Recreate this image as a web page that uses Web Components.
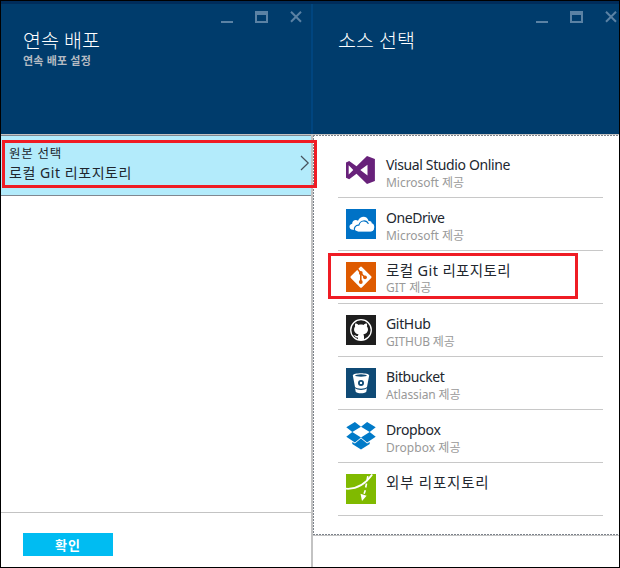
<!DOCTYPE html>
<html lang="ko">
<head>
<meta charset="utf-8">
<title>연속 배포</title>
<style>
html,body{margin:0;padding:0}
body{width:620px;height:568px;overflow:hidden;font-family:"Noto Sans","Noto Sans CJK KR",sans-serif;background:#fff}
</style>
</head>
<body>
<portal-window></portal-window>
<script>
const define=(name,html,setup)=>customElements.define(name,class extends HTMLElement{
  connectedCallback(){
    if(this.shadowRoot)return;
    const t=document.createElement('template');
    t.innerHTML=html;
    this.attachShadow({mode:'open'}).append(t.content.cloneNode(true));
    if(setup)setup(this);
  }
});

/* One line of text whose tracking is adjusted to fill the given width. */
define('fit-text','<style>:host{display:block;white-space:nowrap}:host([large]){font-size:14.5px;margin-top:-1px}span{display:inline-block}</style><span><slot></slot></span>',el=>{
  const s=el.shadowRoot.querySelector('span'),w=+el.getAttribute('width');
  const n=[...el.textContent].length;
  s.style.letterSpacing=((w-s.getBoundingClientRect().width)/n)+'px';
});

define('window-buttons',`<style>:host{display:block;height:12px;color:#5b82a4}svg{display:block}</style>
<svg width="82" height="12" viewBox="0 0 82 12" fill="currentColor"><path d="M0 10h12v2H0z"/><path fill-rule="evenodd" d="M34 0h13v12H34zM36 4v6h9V4z"/><path d="M70 .8l10 10M80 .8l-10 10" fill="none" stroke="currentColor" stroke-width="2"/></svg>`);

define('blade-header',`<style>
:host{display:block;box-sizing:border-box;height:133px;background:#003c6c;border-top:3px solid #002c5a;color:#fff;overflow:hidden}
window-buttons{margin:7px 0 0 var(--buttons)}
.t{margin:4px 0 0 var(--inset);font-size:19.5px;font-weight:300;line-height:28px}
.s{margin:-2px 0 0 22px;font-size:11px;font-weight:700;line-height:16px;color:#b4bac2}
</style><window-buttons></window-buttons><div class="t"><slot name="title"></slot></div><div class="s"><slot name="subtitle"></slot></div>`);

define('selected-source',`<style>
:host{display:flex;box-sizing:border-box;height:61px;background:#b3ebfb;border-top:1px solid #808790;border-bottom:1px solid #808790;justify-content:space-between;color:#20262e}
.c{padding:9px 0 0 8px}.a{font-size:12.5px;line-height:18px}.b{font-size:14px;line-height:20px}
svg{display:block;margin:19px 1px 0 0}
</style><div class="c"><fit-text class="a" width="53">원본 선택</fit-text><fit-text class="b" width="123">로컬 Git 리포지토리</fit-text></div>
<svg width="10" height="16" fill="none" stroke="#47515d" stroke-width="1.2"><path d="M1 1l7.2 7L1 15"/></svg>`);

define('source-row',`<style>
:host{display:flex;box-sizing:border-box;height:53px;width:265px;border-bottom:1px solid #c8c8c8;padding:11px 0 0 8px}
.i{width:30px;height:30px;flex:none}.c{padding-left:10px;margin-top:-1px}
.n{font-size:14px;line-height:20px;height:20px;color:#22272f}.p{font-size:12px;line-height:16px;color:#999}
</style><div class="i"><slot name="icon"></slot></div><div class="c"><div class="n"><slot name="name"></slot></div><div class="p"><slot name="provider"></slot></div></div>`);

define('source-icon','<style>:host{display:block}svg{display:block}:host([name=vs]) svg{margin-top:-1px}</style><svg width="30" height="30" viewBox="0 0 30 30"></svg>',el=>{
  el.shadowRoot.querySelector('svg').innerHTML={
  vs:'<path fill="#68217a" fill-rule="evenodd" d="M21 .9L28.9 4V26L21 29 10.5 18.8 3.2 24.2 0 22.8V7.5L3.2 6.1 10.5 11.3zM21.5 9.8L14.3 15.1 21.5 20.6zM2.7 10.2V19.6L7.3 15z"/>',
  od:'<path fill="#0072c6" d="M0 0h30v30H0z"/><path fill="#fff" d="M7 20.8C2.7 20.8 2.3 15.3 6.2 14.8 6 11.5 9.7 10.1 12 11.8 14.2 6.3 21.5 6.4 22.6 12.1 25.3 11.9 25.8 13.4 25.7 14.2 29.6 15 29 22.3 24.5 22.3H12z"/><path fill="none" stroke="#0072c6" stroke-width="1.1" d="M9.2 22.7C6.8 18.9 10 15.8 13 16.2 14 11 20.5 10.5 22.4 15"/><path fill="#fff" d="M12.5 22.4C9 22.4 9.3 17.2 13.5 17.2 14 12.2 20.3 11.7 22 15.5 27 13 31 22 24.5 22.4z"/>',
  git:'<path fill="#de5a00" d="M0 0h30v30H0z"/><rect x="7.2" y="7.4" width="15.6" height="15.6" rx="1.2" fill="#fff" transform="rotate(45 15 15.2)"/><path d="M11.5 7l3.3 4v9M15 11.5l4.2 4" stroke="#de5a00" stroke-width="1.6" fill="none"/><circle cx="14.8" cy="11" r="1.9" fill="#de5a00"/><circle cx="19" cy="15.3" r="1.9" fill="#de5a00"/><circle cx="14.8" cy="20" r="1.9" fill="#de5a00"/>',
  gh:'<path fill="#1e1e1e" d="M0 0h30v30H0z"/><circle cx="15" cy="15" r="10.3" fill="none" stroke="#fff" stroke-width="1.3"/><path fill="#fff" d="M9.2 8.6C10.5 8.5 11.6 9.2 12.5 9.9 14 9.5 16 9.5 17.5 9.9 18.4 9.2 19.5 8.5 20.8 8.6 21.3 9.8 21.1 10.8 20.9 11.6 23.6 15 21 19.2 17.3 19.5 18.4 20.5 18 23 18.1 25H11.9V22.5C9 23 9.2 20.5 7.3 20 9.4 19.4 9.7 21.4 11.9 21 11.9 20.4 12.1 19.9 12.6 19.5 8.8 19.1 6.7 15 9.1 11.6 8.9 10.6 8.8 9.7 9.2 8.6z"/>',
  bb:'<path fill="#0f4a75" d="M0 0h30v30H0z"/><path fill="#fff" d="M6.8 7.3C7 4.4 23 4.4 23.2 7.3L21 19C19 21.2 11 21.2 9 19zM9 20.3C12 22.4 18 22.4 21 20.3L20.2 24C18 25.7 12 25.7 9.8 24z"/><ellipse cx="15" cy="7.5" rx="5.9" ry="1.2" fill="#0f4a75"/><circle cx="15" cy="14.9" r="2.1" fill="#fff" stroke="#0f4a75" stroke-width="1.8"/>',
  db:'<path fill="#007ac8" d="M8.9 1L15 5.7 6.3 11.1.3 6.2zM21.1 1L29.7 6.2 23.7 11.1 15 5.7zM.3 15.8L6.3 11.1 15 16.4 8.9 21.4zM23.7 11.1L29.7 15.8 21.1 21.4 15 16.4zM15 17.6L21.1 22.6 23.7 21V23L15 28.6 6.3 23V21L8.9 22.6z"/>',
  ext:'<path fill="#80ba00" d="M0 0h30v30H0z"/><path d="M0 14.7C11 15.5 20 9.3 26.2.6" fill="none" stroke="#fff" stroke-width="1.8"/><path d="M21.8 2.2L21 7M20.5 9.5l-.8 4M19.3 16.2l-1.2 3.6" stroke="#fff" stroke-width="1.6"/><path fill="#fff" d="M14.5 19.8L20.6 21.7 16 27z"/>'
  }[el.getAttribute('name')];
});

/* The outline is a fine 2px-on, 1px-off dash on three sides. */
define('source-list',`<style>
:host{display:block;box-sizing:border-box;height:400px;padding:10px 0 0 25px;
--h:repeating-linear-gradient(90deg,#7d838b 0 2px,#fff 2px 3px);
background:var(--h) top/100% 1px no-repeat,var(--h) bottom/100% 1px no-repeat,repeating-linear-gradient(#7d838b 0 2px,#fff 2px 3px) left/1px 100% no-repeat}
</style><slot></slot>`);

define('confirm-button',`<style>:host{display:flex;width:90px;height:23px;background:#00bcf2;color:#fff;justify-content:center;align-items:center;font-size:13px;font-weight:700;line-height:22px}</style><slot></slot>`);

/* Red callout frame laid over the page. */
define('callout-frame','<style>:host{position:absolute;box-sizing:border-box;border:3px solid #ef1c24;pointer-events:none}</style>');

const row=(icon,name,w,prov,pw)=>`<source-row><source-icon slot="icon" name="${icon}"></source-icon><fit-text slot="name" width="${w}"${/[가-힣]/.test(name)?' large':''}>${name}</fit-text>${prov?`<fit-text slot="provider" width="${pw}">${prov}</fit-text>`:''}</source-row>`;

define('portal-window',`<style>
:host{display:grid;position:relative;box-sizing:border-box;width:620px;height:568px;border:1px solid #000;grid-template-columns:310px 2px 306px;background:#fff}
.blade{display:flex;flex-direction:column;min-width:0}
blade-header{flex:none}
.rule{height:1px;background:#c3c3c3;flex:none}
.divider{background:linear-gradient(#002c5a 0 3px,#00457f 3px 133px,#c3c3c3 133px)}
.left{--inset:22px;--buttons:220px}.right{--inset:25px;--buttons:223px}
.fill{flex:1}
.foot{border-top:1px solid #c3c3c3;padding:20px 0 0 22px;box-sizing:content-box;height:34px}
.one{left:1px;top:139px;width:315px;height:48px}.two{left:327px;top:252px;width:250px;height:46px}
</style>
<div class="blade left"><blade-header><fit-text slot="title" width="77">연속 배포</fit-text><fit-text slot="subtitle" width="68">연속 배포 설정</fit-text></blade-header><div class="rule"></div><selected-source></selected-source><div class="fill"></div><div class="foot"><confirm-button><fit-text width="26">확인</fit-text></confirm-button></div></div>
<div class="divider"></div>
<div class="blade right"><blade-header><fit-text slot="title" width="77">소스 선택</fit-text></blade-header><div class="rule"></div><source-list>
${row('vs','Visual Studio Online',124,'Microsoft 제공',78)}
${row('od','OneDrive',58.5,'Microsoft 제공',78)}
${row('git','로컬 Git 리포지토리',125,'GIT 제공',45.5)}
${row('gh','GitHub',44.5,'GITHUB 제공',68.5)}
${row('bb','Bitbucket',58.5,'Atlassian 제공',74.5)}
${row('db','Dropbox',54.5,'Dropbox 제공',74.5)}
${row('ext','외부 리포지토리',103.5)}
</source-list><div class="rule"></div></div>
<callout-frame class="one"></callout-frame><callout-frame class="two"></callout-frame>`);
</script>
</body>
</html>
